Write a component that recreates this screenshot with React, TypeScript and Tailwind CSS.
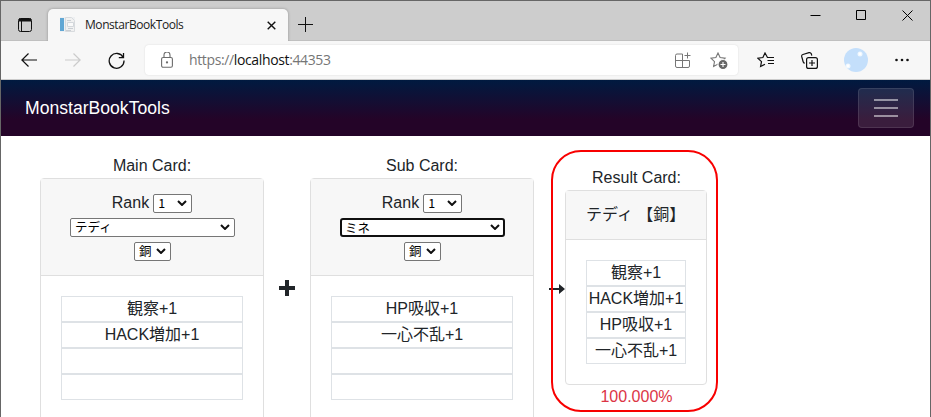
import React from "react";

const uiFont = "font-['Open_Sans','Noto_Sans_CJK_JP',sans-serif]";

function Select({ label, width, focused = false }: { label: string; width: string; focused?: boolean }) {
  return (
    <span
      className={`relative inline-flex h-[19px] items-center bg-white ${width} ${
        focused ? "rounded-[3px] border-2 border-[#101010]" : "rounded-[2px] border border-[#767676]"
      }`}
    >
      <select
        className={`h-full w-full appearance-none bg-transparent p-0 pb-px font-['Noto_Sans_CJK_JP',sans-serif] text-[12.500px] leading-[16px] text-black outline-none ${
          focused ? "pl-[3px]" : "pl-1"
        }`}
      >
        <option>{label}</option>
      </select>
      <svg
        className={`pointer-events-none absolute h-[6px] w-[10px] ${focused ? "right-[3px] top-[4px]" : "right-[4px] top-[5px]"}`}
        viewBox="0 0 10 6"
        fill="none"
        stroke="#101010"
        strokeWidth="2"
      >
        <path d="M1 1l4 4 4-4" />
      </svg>
    </span>
  );
}

function Skills({ items, width }: { items: string[]; width: string }) {
  return (
    <div className={width}>
      {items.map((item, i) => (
        <div key={i} className="h-[26px] whitespace-nowrap border border-[#dee2e6] text-center leading-6">
          {item}
        </div>
      ))}
    </div>
  );
}

function Card({ title, monster, skills, focused }: { title: string; monster: string; skills: string[]; focused?: boolean }) {
  return (
    <section className="w-[224px] shrink-0">
      <h2 className="h-6 text-center">{title}</h2>
      <div className="h-[260px] rounded-[4px] border border-[#dfdfdf]">
        <div className="flex h-[97px] flex-col items-center border-b border-[#dfdfdf] bg-[#f7f7f7] pt-3">
          <div className="flex h-6 items-center gap-1">
            <span>Rank</span>
            <Select label="1" width="w-[39px]" />
          </div>
          <div className="flex h-6 items-center pl-px">
            <Select label={monster} width="w-[165px]" focused={focused} />
          </div>
          <div className="flex h-6 items-center pl-px">
            <Select label="銅" width="w-[37px]" />
          </div>
        </div>
        <div className="p-5">
          <Skills items={skills} width="w-[182px]" />
        </div>
      </div>
    </section>
  );
}

function TitleBar() {
  return (
    <div className="flex h-10 border-b border-[#c0c0c0] bg-[#cdcdcd]">
      <div className="flex w-[47px] items-center pl-[17px] pt-[8px]">
        <svg width="14" height="14" viewBox="0 0 14 14" fill="none" stroke="#111">
          <rect x=".5" y=".5" width="13" height="13" rx="2" />
          <path d="M1 2h12" strokeWidth="3" />
          <path d="M3.5 3v10" />
        </svg>
      </div>
      <div className="relative mt-2 flex h-8 w-[240px] items-center rounded-t-[5px] bg-[#f7f7f7] pl-3 shadow-[0_0_3px_rgba(0,0,0,.3)] [clip-path:inset(-4px_-4px_0_-4px)]">
        <svg width="16" height="16" viewBox="0 0 16 16">
          <path d="M0 0h15v15H0z" fill="#eef0f2" />
          <path d="M0 1h4v13H0z" fill="#61a7d4" />
          <path d="M5.500 .5h6l3 3v11h-9z" fill="#f1f1f1" stroke="#d8dbde" />
          <path d="M7 3.500h4M8 8.500h5M8 11.500h5M6 13.500h5" stroke="#c9ced3" />
          <path d="M7.500 5.500h6v4h-6z" fill="#fafafa" stroke="#d3d7db" />
        </svg>
        <span className={`ml-[9px] w-[180px] text-[12px] leading-4 tracking-[-0.43px] text-[#1c1c1c] ${uiFont}`}>MonstarBookTools</span>
        <svg className="ml-[2px] mt-px shrink-0" width="9" height="9" viewBox="0 0 9 9" stroke="#111" strokeWidth="1.4">
          <path d="M.7.7l7.6 7.6M8.3.7L.7 8.3" />
        </svg>
      </div>
      <svg className="ml-[10px] mt-[16px]" width="15" height="15" viewBox="0 0 15 15" stroke="#111">
        <path d="M7.5 0v15M0 7.5h15" />
      </svg>
      <div className="ml-auto mr-[17px] flex gap-[35px] pt-[9px]">
        <svg width="11" height="11" viewBox="0 0 11 11" stroke="#000">
          <path d="M.5 5.5h10" />
        </svg>
        <svg width="11" height="11" viewBox="0 0 11 11" fill="none" stroke="#000">
          <path d="M.5.5h9v9h-9z" />
        </svg>
        <svg width="11" height="11" viewBox="0 0 11 11" stroke="#000">
          <path d="M.5.5l10 10M10.5.5l-10 10" />
        </svg>
      </div>
    </div>
  );
}

const starPath = "M8 1l2.1 4.5 5 .7-3.6 3.4.9 4.9L8 12.1l-4.4 2.4.9-4.9L.9 6.2l5-.7z";

function Toolbar() {
  return (
    <div className="flex h-[39px] items-center border-b border-[#cbcbcb] bg-[#f7f7f7] pl-5">
      <svg width="16" height="14" viewBox="0 0 16 14" fill="none" stroke="#111" strokeWidth="1.2">
        <path d="M16 7H.9M7.5.5L.9 7l6.6 6.5" />
      </svg>
      <svg className="ml-7" width="16" height="14" viewBox="0 0 16 14" fill="none" stroke="#cbcbcb" strokeWidth="1.2">
        <path d="M0 7h15.1M8.5.5L15.1 7l-6.6 6.5" />
      </svg>
      <svg className="ml-[27px]" width="17" height="17" viewBox="0 0 17 17" fill="none" stroke="#111" strokeWidth="1.3">
        <path d="M15.2 5.5A7.4 7.4 0 1 0 16 8.5M15.5 1v4.7h-4.7" />
      </svg>
      <div className="ml-5 flex h-[30px] w-[593px] items-center rounded-[4px] bg-white pl-4 pr-[10px] shadow-[0_0_2px_rgba(0,0,0,.12)]">
        <svg className="mb-px" width="12" height="16" viewBox="0 0 12 16" fill="none" stroke="#6c6c6c" strokeWidth="1.1">
          <rect x=".6" y="5.5" width="10.8" height="9.8" rx="1.5" />
          <path d="M3 5.5V3a3 3 0 0 1 6 0v2.500" />
          <circle cx="6" cy="10.4" r=".6" fill="#6c6c6c" />
        </svg>
        <span className={`ml-4 text-[14px] leading-5 tracking-[-0.37px] text-[#767676] ${uiFont}`}>
          https://<span className="text-[#111]">localhost</span>:44353
        </span>
        <svg className="ml-auto" width="16" height="16" viewBox="0 0 16 16" fill="none" stroke="#767676">
          <path d="M7.500 2H2a1.500 1.500 0 0 0-1.500 1.500V14A1.500 1.500 0 0 0 2 15.500h11a1.500 1.500 0 0 0 1.500-1.500V8.500H.5M7.500 2v13.500M12.500.5v6M9.500 3.500h6" />
        </svg>
        <svg className="ml-[19px]" width="18" height="17" viewBox="0 0 18 17" fill="none" stroke="#767676" strokeWidth="1.1">
          <path d={starPath} />
          <circle cx="13" cy="12.500" r="5" fill="#666" stroke="#fff" />
          <path d="M13 10v5M10.500 12.500h5" stroke="#fff" />
        </svg>
      </div>
      <svg className="ml-[19px]" width="18" height="16" viewBox="0 0 18 16" fill="none" stroke="#111" strokeWidth="1.2">
        <path d="M10.500 5.500L8 1 5.900 5.500l-5 .7 3.600 3.400-.9 4.900L8 12.200M10 5.500h7M10.500 8.500H17M11 11.500h6" />
      </svg>
      <svg className="ml-[26px]" width="17" height="17" viewBox="0 0 17 17" fill="none" stroke="#111" strokeWidth="1.2">
        <path d="M3.500 11.500L2.200 10 .7 4.500a1.700 1.700 0 0 1 1.200-2L8 .7a2 2 0 0 1 2.300 1.100l.5 1.800" />
        <rect x="5.600" y="5.600" width="10.800" height="10.800" rx="2" />
        <path d="M11 8v6M8 11h6" />
      </svg>
      <svg className="ml-[26px]" width="24" height="24" viewBox="0 0 24 24">
        <circle cx="12" cy="12" r="12" fill="#c4dffb" />
        <circle cx="16" cy="6" r="2.500" fill="#eef7ff" />
        <circle cx="4" cy="18" r="2.500" fill="#eef7ff" />
        <circle cx="16" cy="6" r="1.400" fill="#fff" />
        <circle cx="4" cy="18" r="1.400" fill="#fff" />
      </svg>
      <svg className="ml-[27px]" width="14" height="4" viewBox="0 0 14 4" fill="#111">
        <circle cx="1.500" cy="2" r="1.300" />
        <circle cx="7" cy="2" r="1.300" />
        <circle cx="12.500" cy="2" r="1.300" />
      </svg>
    </div>
  );
}

export default function App() {
  return (
    <div className="h-[417px] w-[931px] overflow-hidden border-x border-t border-[#666] bg-white font-['Liberation_Sans','Noto_Sans_CJK_JP',sans-serif] text-[16px] leading-6 text-[#212529]">
      <TitleBar />
      <Toolbar />
      <nav className="flex h-14 items-center justify-between bg-[linear-gradient(180deg,#001a40_0%,#240428_70%)] pl-6 pr-4">
        <span className="text-[17.600px] text-white">MonstarBookTools</span>
        <button className="flex h-10 w-14 flex-col items-center justify-center gap-[6px] rounded-[4px] border border-white/10 bg-white/10">
          <span className="h-[2px] w-6 bg-white/50" />
          <span className="h-[2px] w-6 bg-white/50" />
          <span className="h-[2px] w-6 bg-white/50" />
        </button>
      </nav>
      <main className="flex items-start pl-[39px] pt-[18px]">
        <Card title="Main Card:" monster="テディ" skills={["観察+1", "HACK増加+1", "", ""]} />
        <svg className="ml-[15px] mr-[15px] mt-[126px] shrink-0" width="16" height="16" viewBox="0 0 16 16" fill="#212529">
          <path d="M6 0h4v6h6v4h-6v6H6v-6H0V6h6z" />
        </svg>
        <Card title="Sub Card:" monster="ミネ" skills={["HP吸収+1", "一心不乱+1", "", ""]} focused />
        <svg className="ml-[15px] mt-[130px] shrink-0" width="16" height="10" viewBox="0 0 16 10" fill="#212529">
          <path d="M0 4h10V0l6 5-6 5V6H0z" />
        </svg>
        <section className="relative w-[142px] shrink-0 pt-3">
          <h2 className="h-6 pl-px text-center">Result Card:</h2>
          <div className="h-[195px] rounded-[4px] border border-[#dfdfdf]">
            <div className="h-[49px] whitespace-pre border-b border-[#dfdfdf] bg-[#f7f7f7] pl-5 pt-3">テディ 【銅】</div>
            <div className="p-5">
              <Skills items={["観察+1", "HACK増加+1", "HP吸収+1", "一心不乱+1"]} width="w-[100px]" />
            </div>
          </div>
          <p className="pl-px text-center text-[#dc3545]">100.000%</p>
          <div className="pointer-events-none absolute left-[-14px] top-[-4px] h-[262px] w-[167px] rounded-[30px] border-2 border-[#f80000]" />
        </section>
      </main>
    </div>
  );
}
